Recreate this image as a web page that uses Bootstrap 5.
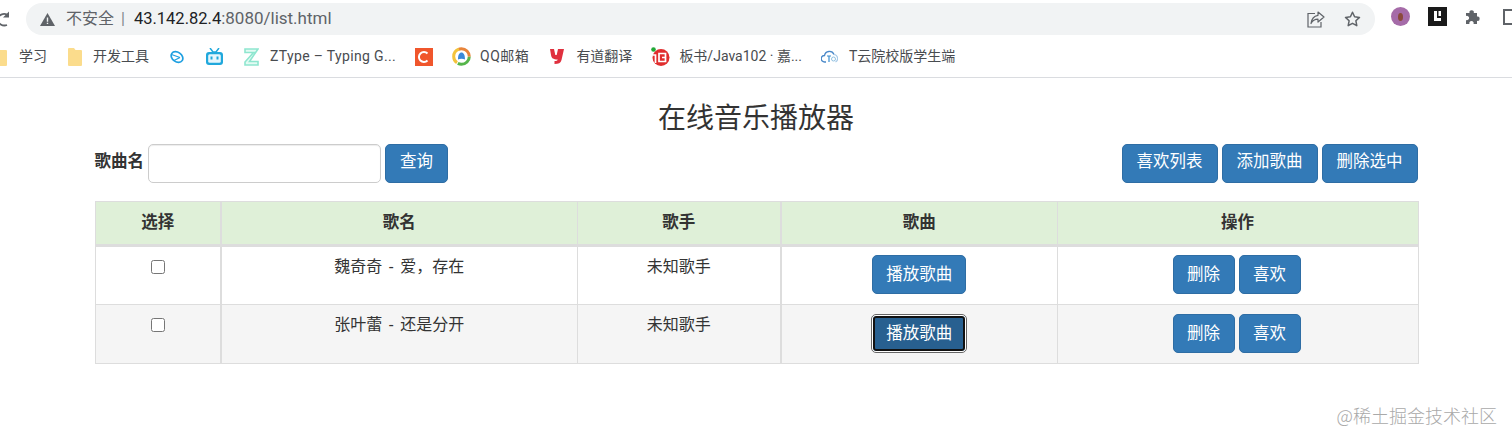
<!DOCTYPE html>
<html lang="zh-CN">
<head>
  <meta charset="UTF-8">
  <meta name="viewport" content="width=device-width, initial-scale=1">
  <title>在线音乐播放器</title>
  <link href="https://cdn.jsdelivr.net/npm/bootstrap@5.3.3/dist/css/bootstrap.min.css" rel="stylesheet">
  <style>
    body { font-family: "Liberation Sans", "Noto Sans CJK SC", sans-serif; color: #333; font-size: 16px; background: #fff; height: 441px; overflow: hidden; position: relative; }

    /* browser chrome */
    .chrome-top { height: 36px; padding-top: 3px; }
    .reload-box { width: 26px; flex: none; }
    .addr-bar { width: 1349px; flex: none; height: 32px; background: #f1f3f4; border-radius: 16px; padding-left: 14px; padding-right: 14px; font-family: "Roboto", "Noto Sans CJK SC", sans-serif; font-size: 17px; color: #5f6368; }
    .addr-host { color: #202124; font-size: 16.5px; }
    .addr-warn { margin-right: 11px; }
    .addr-zh { font-size: 16px; }
    .addr-sep { margin: 0 9px 0 7px; color: #80868b; font-size: 16px; }
    .addr-right { gap: 19px; }
    .ext-row { gap: 18px; margin-left: 16px; flex: none; }
    .ext-last { margin-left: 3px; }
    .bm-bar { height: 42px; border-bottom: 1px solid #dadce0; margin-left: -12px; gap: 21px; font-size: 14px; color: #494c50; font-family: "Roboto", "Noto Sans CJK SC", sans-serif; }
    .bm-item { gap: 11px; white-space: nowrap; }
    .bm-l1 { margin-left: -1px; }
    .bm-l2 { margin-left: -2px; }
    .bm-l3 { margin-left: -3px; }
    .bm-gap9 { gap: 9px; }
    .bm-gap12 { gap: 12px; }
    .bm-wide { letter-spacing: .35px; }
    .bm-qq { letter-spacing: .5px; }

    /* page */
    .page-wrap { width: 1323px; margin: 0 auto; }
    .page-title { font-family: "Noto Sans CJK SC", sans-serif; font-size: 28px; font-weight: 400; line-height: 40px; margin: 18px 0 8px; text-align: center; color: #333; }
    .bar-row { height: 39px; margin-bottom: 18px; }
    .name-label { font-weight: 700; font-size: 16.5px; font-family: "Noto Sans CJK SC", sans-serif; margin: 0 4px 7px 0; }
    .name-input { width: 233px; height: 39px; border: 1px solid #ccc; border-radius: 5px; box-shadow: inset 0 1px 1px rgba(0,0,0,.075); }
    .blue-btn { height: 39px; background: #337ab7; border: 1px solid #2e6da4; color: #fff; font-size: 16.5px; line-height: 1; padding: 0 14px 6px; border-radius: 5px; font-family: "Noto Sans CJK SC", sans-serif; white-space: nowrap; }
    .blue-btn:hover { background: #337ab7; border-color: #2e6da4; color: #fff; }
    .row-btn { padding: 0 13.5px 2px; }
    .play-btn { padding-left: 13px; padding-right: 13px; }
    .search-btn { margin-left: 4px; }
    .gap-tight { gap: 4px; }
    .focus-btn, .focus-btn:hover { background: #286090; border: 2px solid #fff; outline: 1px solid #666; outline-offset: -1px; box-shadow: inset 0 0 0 2px #111; }

    /* song table */
    .song-table { width: 1323px; table-layout: fixed; margin: 0; border-color: #ddd; font-size: 16px; color: #333; font-family: "Liberation Sans", "Noto Sans CJK SC", sans-serif; }
    .song-table > :not(caption) > * > * { border: 1px solid #ddd; padding: 8px 8px 9px; text-align: center; vertical-align: top; line-height: 24px; color: #333; word-spacing: 2px; }
    .song-table thead th { background: #dff0d8; border-bottom: 3px solid #ddd; font-size: 16.5px; font-weight: 700; height: 44px; padding: 7px 8px 9px; vertical-align: middle; }
    .song-table tbody td { height: 59px; }
    .song-table tbody tr:nth-child(even) td { background: #f5f5f5; }
    .song-table .line-r { border-right-width: 2px; }
    .w-pick { width: 126px; }
    .w-song { width: 356px; }
    .w-singer { width: 204px; }
    .w-play { width: 276px; }
    .w-ops { width: 361px; }
    .song-check { width: 14px; height: 14px; margin: 5px auto 0; display: block; accent-color: #555; }
    .song-table > tbody > tr > .btn-cell { padding-top: 8px; padding-bottom: 8px; }
    .song-table > tbody > tr:nth-child(even) > .btn-cell { padding-top: 9px; padding-bottom: 7px; }
    .song-table > tbody > tr > .ops-cell { padding-right: 10px; }

    .mark-juejin { position: absolute; right: 15px; top: 402px; font-size: 18px; line-height: 26px; color: #a9a9a9; font-family: "Noto Sans CJK SC", sans-serif; font-weight: 300; }
  </style>
</head>
<body>
  <!-- browser bar -->
  <div class="chrome-top d-flex align-items-start">
    <div class="reload-box">
      <svg width="26" height="32" viewBox="0 0 26 32"><path d="M7 11.500A7 7 0 0 0 -2.500 16a7 7 0 0 0 9.500 6" fill="none" stroke="#5f6368" stroke-width="1.800"/><path d="M9 8.500v6H3z" fill="#5f6368"/></svg>
    </div>
    <div class="addr-bar d-flex align-items-center">
      <svg class="addr-warn" width="15" height="13" viewBox="0 0 15 13"><path d="M7.500 0 15 13H0z" fill="#5f6368"/><path d="M6.800 4.500h1.400v4.200H6.800zM6.800 9.700h1.400v1.400H6.800z" fill="#f1f3f4"/></svg>
      <span class="addr-zh">不安全</span><span class="addr-sep">|</span><span class="addr-host">43.142.82.4</span><span>:8080/list.html</span>
      <div class="addr-right d-flex align-items-center ms-auto">
        <svg width="18" height="17" viewBox="0 0 18 17"><path d="M8 2.500H1v13.500h13v-5" fill="none" stroke="#5f6368" stroke-width="1.200"/><path d="M11 1l6 5-6 5V8.200C8 8.200 5.500 9.500 4 12.500 4.500 8 7 5 11 4.300z" fill="#f1f3f4" stroke="#5f6368" stroke-width="1.200" stroke-linejoin="round"/></svg>
        <svg width="17" height="16" viewBox="0 0 17 16"><path d="M8.500 1.300l2.100 4.500 4.900.6-3.600 3.400.9 4.900-4.300-2.400-4.300 2.400.9-4.900L1.500 6.400l4.900-.6z" fill="none" stroke="#5f6368" stroke-width="1.500" stroke-linejoin="round"/></svg>
      </div>
    </div>
    <div class="ext-row d-flex align-items-center pt-1">
      <svg width="19" height="19" viewBox="0 0 19 19"><circle cx="9.500" cy="9.500" r="9.500" fill="#a56ba8"/><ellipse cx="9.500" cy="10" rx="2.500" ry="4" fill="#8a4a3c"/></svg>
      <svg width="19" height="19" viewBox="0 0 19 19"><rect width="19" height="19" fill="#1a1a1a"/><path d="M6 4h3v7h4v3H6zM10.500 4H13v5h-2.500z" fill="#fff"/></svg>
      <svg width="17" height="17" viewBox="0 0 17 17"><path d="M1 5h3.500a2.200 2.200 0 1 1 4.300 0H12v3.500a2.200 2.200 0 1 1 0 4.300V16H8.500a2.200 2.200 0 1 0-4 0H1v-4a2.200 2.200 0 1 0 0-4z" fill="#5f6368"/></svg>
      <svg class="ext-last" width="18" height="16" viewBox="0 0 18 16"><path d="M1 1h16v14H1z" fill="none" stroke="#5f6368" stroke-width="2"/></svg>
    </div>
  </div>

  <!-- bookmarks -->
  <div class="bm-bar d-flex align-items-center">
    <div class="bm-item d-flex align-items-center">
      <svg width="20" height="18" viewBox="0 0 20 18"><path d="M1 1a1 1 0 0 1 1-1h6l2 2h8a1 1 0 0 1 1 1v14a1 1 0 0 1-1 1H2a1 1 0 0 1-1-1z" fill="#fbdc8c"/></svg>
      <span>学习</span>
    </div>
    <div class="bm-item d-flex align-items-center">
      <svg width="14" height="18" viewBox="0 0 14 18"><path d="M0 1a1 1 0 0 1 1-1h5l1.500 2H13a1 1 0 0 1 1 1v14a1 1 0 0 1-1 1H1a1 1 0 0 1-1-1z" fill="#fbdc8c"/></svg>
      <span>开发工具</span>
    </div>
    <div class="bm-item d-flex align-items-center">
      <svg width="14" height="16" viewBox="0 0 14 16"><ellipse cx="7" cy="8" rx="6.300" ry="4.700" transform="rotate(35 7 8)" fill="none" stroke="#1e9fe0" stroke-width="1.700"/><path d="M1.500 5.500 10 8.500M4 11.500l6-3" fill="none" stroke="#1e9fe0" stroke-width="1.300"/></svg>
    </div>
    <div class="bm-item d-flex align-items-center">
      <svg width="19" height="18" viewBox="0 0 19 18"><path d="M5 0l3 4h3l3-4" fill="none" stroke="#20a8dc" stroke-width="1.500"/><rect x="1" y="4" width="17" height="13" rx="3" fill="#20a8dc"/><rect x="3.200" y="6.200" width="12.600" height="8.600" rx="1.500" fill="#e6f6fc"/><path d="M5.500 8.500h2v3h-2zM11.500 8.500h2v3h-2z" fill="#20a8dc"/></svg>
    </div>
    <div class="bm-item bm-l1 d-flex align-items-center">
      <svg width="15" height="18" viewBox="0 0 15 18"><path d="M1 1h13L5.500 13.500H14V17H1v-3L9.500 4.500H1z" fill="#e3fbf3" stroke="#8ee6cf" stroke-width="1.600"/></svg>
      <span class="bm-wide">ZType – Typing G...</span>
    </div>
    <div class="bm-item bm-l2 d-flex align-items-center">
      <svg width="18" height="18" viewBox="0 0 18 18"><rect width="18" height="18" fill="#f0562c"/><path d="M12.500 5.500a5 5 0 1 0 0 7" fill="none" stroke="#fff" stroke-width="2"/></svg>
    </div>
    <div class="bm-item bm-gap9 bm-l2 d-flex align-items-center">
      <svg width="19" height="19" viewBox="0 0 19 19"><circle cx="9.500" cy="9.500" r="7.800" fill="#fff" stroke="#55b54a" stroke-width="3" stroke-dasharray="16 33"/><circle cx="9.500" cy="9.500" r="7.800" fill="none" stroke="#e8843a" stroke-width="3" stroke-dasharray="16 33" stroke-dashoffset="16"/><circle cx="9.500" cy="9.500" r="7.800" fill="none" stroke="#f3c33c" stroke-width="3" stroke-dasharray="17 32" stroke-dashoffset="32"/><path d="M6 12.500c0-5 1.500-7 3.500-7s3.500 2 3.500 7c-2-1-5-1-7 0z" fill="#3a88d8"/></svg>
      <span class="bm-qq">QQ邮箱</span>
    </div>
    <div class="bm-item bm-gap12 d-flex align-items-center">
      <svg width="14" height="17" viewBox="0 0 14 17"><path d="M0 1h4l1.300 6h1.400L8 1h6l-2.500 11c-.8 3-3 4-7 4v-3c2 0 3 0 3.200-1.500C3 11.500 1.500 10 1 7z" fill="#e0303e"/></svg>
      <span>有道翻译</span>
    </div>
    <div class="bm-item bm-gap9 bm-l2 d-flex align-items-center">
      <svg width="19" height="19" viewBox="0 0 19 19"><circle cx="10" cy="10.500" r="8.500" fill="#e02e2e"/><circle cx="2.500" cy="2.500" r="2.300" fill="#22a838"/><path d="M2 8h2.500v8M8 6.500h6.500v8H8zM11 10.500h3.500" fill="none" stroke="#fff" stroke-width="1.700"/></svg>
      <span>板书/Java102 · 嘉...</span>
    </div>
    <div class="bm-item bm-l2 d-flex align-items-center">
      <svg width="17" height="14" viewBox="0 0 17 14"><path d="M5 12H3.500a3 3 0 0 1 0-6.500 5 5 0 0 1 9.500-1" fill="none" stroke="#4a88c8" stroke-width="1.300"/><path d="M13 4.500a4 4 0 0 1 1.500 7.500" fill="none" stroke="#a9cbe8" stroke-width="1.200"/><path d="M6 6h4M8 6v6" fill="none" stroke="#3a8ed0" stroke-width="1.200"/><circle cx="12.500" cy="9" r="2" fill="none" stroke="#8fc0e0"/></svg>
      <span>T云院校版学生端</span>
    </div>
  </div>

  <!-- page -->
  <div class="page-wrap">
    <h1 class="page-title">在线音乐播放器</h1>

    <div class="bar-row d-flex align-items-center">
      <label class="name-label" for="songName">歌曲名</label>
      <input class="name-input form-control" id="songName" type="text">
      <button type="button" class="btn blue-btn search-btn">查询</button>
      <div class="d-flex gap-tight ms-auto">
        <button type="button" class="btn blue-btn">喜欢列表</button>
        <button type="button" class="btn blue-btn">添加歌曲</button>
        <button type="button" class="btn blue-btn">删除选中</button>
      </div>
    </div>

    <table class="table song-table">
      <thead>
        <tr>
          <th class="w-pick line-r">选择</th>
          <th class="w-song">歌名</th>
          <th class="w-singer line-r">歌手</th>
          <th class="w-play">歌曲</th>
          <th class="w-ops">操作</th>
        </tr>
      </thead>
      <tbody>
        <tr>
          <td class="line-r"><input class="song-check" type="checkbox"></td>
          <td>魏奇奇 - 爱，存在</td>
          <td class="line-r">未知歌手</td>
          <td class="btn-cell"><button type="button" class="btn blue-btn row-btn play-btn">播放歌曲</button></td>
          <td class="btn-cell ops-cell">
            <div class="d-flex justify-content-center gap-tight">
              <button type="button" class="btn blue-btn row-btn">删除</button>
              <button type="button" class="btn blue-btn row-btn">喜欢</button>
            </div>
          </td>
        </tr>
        <tr>
          <td class="line-r"><input class="song-check" type="checkbox"></td>
          <td>张叶蕾 - 还是分开</td>
          <td class="line-r">未知歌手</td>
          <td class="btn-cell"><button type="button" class="btn blue-btn row-btn play-btn focus-btn">播放歌曲</button></td>
          <td class="btn-cell ops-cell">
            <div class="d-flex justify-content-center gap-tight">
              <button type="button" class="btn blue-btn row-btn">删除</button>
              <button type="button" class="btn blue-btn row-btn">喜欢</button>
            </div>
          </td>
        </tr>
      </tbody>
    </table>
  </div>

  <div class="mark-juejin">@稀土掘金技术社区</div>

  <script src="https://cdn.jsdelivr.net/npm/bootstrap@5.3.3/dist/js/bootstrap.bundle.min.js"></script>
</body>
</html>
